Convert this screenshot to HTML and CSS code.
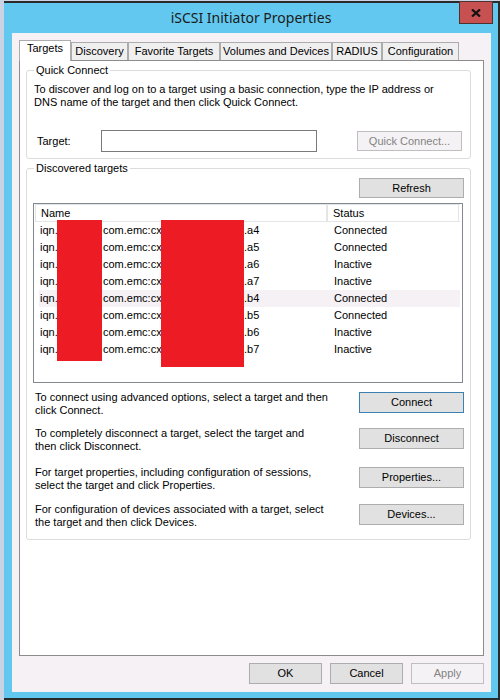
FILE: index.html
```html
<!DOCTYPE html>
<html>
<head>
<meta charset="utf-8">
<link rel="stylesheet" href="styles.css">
</head>
<body>
<div class="window">
  <div class="titlebar">
    <span class="title">iSCSI Initiator Properties</span>
    <div class="close">
      <svg width="10" height="8" viewBox="0 0 10 8"><path d="M1 0.5 L9 7.5 M9 0.5 L1 7.5" stroke="#111" stroke-width="2.2"/></svg>
    </div>
  </div>
  <div class="client">
    <div class="tabs">
      <div class="tab active w-targets">Targets</div>
      <div class="tab w-discovery">Discovery</div>
      <div class="tab w-fav">Favorite Targets</div>
      <div class="tab w-vol">Volumes and Devices</div>
      <div class="tab w-radius">RADIUS</div>
      <div class="tab w-config">Configuration</div>
    </div>
    <div class="panel">
      <fieldset class="group group-qc">
        <legend>Quick Connect</legend>
        <p class="desc-qc">To discover and log on to a target using a basic connection, type the IP address or<br>DNS name of the target and then click Quick Connect.</p>
        <div class="target-row">
          <span class="target-label">Target:</span>
          <div class="input"></div>
          <div class="btn disabled btn-qc">Quick Connect...</div>
        </div>
      </fieldset>
      <fieldset class="group group-dt">
        <legend>Discovered targets</legend>
        <div class="refresh-row">
          <div class="btn">Refresh</div>
        </div>
        <div class="list">
          <div class="list-head">
            <div class="hcell hname">Name</div>
            <div class="hcell hstatus">Status</div>
          </div>
          <div class="rows">
            <div class="row"><div class="ncell"><span class="s1">iqn.</span><span class="s2">com.emc:cx</span><span>.a4</span></div><div class="scell">Connected</div></div>
            <div class="row"><div class="ncell"><span class="s1">iqn.</span><span class="s2">com.emc:cx</span><span>.a5</span></div><div class="scell">Connected</div></div>
            <div class="row"><div class="ncell"><span class="s1">iqn.</span><span class="s2">com.emc:cx</span><span>.a6</span></div><div class="scell">Inactive</div></div>
            <div class="row"><div class="ncell"><span class="s1">iqn.</span><span class="s2">com.emc:cx</span><span>.a7</span></div><div class="scell">Inactive</div></div>
            <div class="row hover"><div class="ncell"><span class="s1">iqn.</span><span class="s2">com.emc:cx</span><span>.b4</span></div><div class="scell">Connected</div></div>
            <div class="row"><div class="ncell"><span class="s1">iqn.</span><span class="s2">com.emc:cx</span><span>.b5</span></div><div class="scell">Connected</div></div>
            <div class="row"><div class="ncell"><span class="s1">iqn.</span><span class="s2">com.emc:cx</span><span>.b6</span></div><div class="scell">Inactive</div></div>
            <div class="row"><div class="ncell"><span class="s1">iqn.</span><span class="s2">com.emc:cx</span><span>.b7</span></div><div class="scell">Inactive</div></div>
          </div>
          <div class="redact r1"></div>
          <div class="redact r2"></div>
        </div>
        <div class="actions">
          <div class="action">
            <p class="adesc">To connect using advanced options, select a target and then<br>click Connect.</p>
            <div class="btn focus">Connect</div>
          </div>
          <div class="action gap10">
            <p class="adesc">To completely disconnect a target, select the target and<br>then click Disconnect.</p>
            <div class="btn">Disconnect</div>
          </div>
          <div class="action gap13">
            <p class="adesc">For target properties, including configuration of sessions,<br>select the target and click Properties.</p>
            <div class="btn">Properties...</div>
          </div>
          <div class="action gap11">
            <p class="adesc">For configuration of devices associated with a target, select<br>the target and then click Devices.</p>
            <div class="btn">Devices...</div>
          </div>
        </div>
      </fieldset>
    </div>
    <div class="footer">
      <div class="btn fbtn">OK</div>
      <div class="btn fbtn">Cancel</div>
      <div class="btn fbtn disabled">Apply</div>
    </div>
  </div>
</div>
</body>
</html>
```
FILE: styles.css
```css
* { box-sizing: border-box; }
html, body {
  margin: 0;
  padding: 0;
  width: 500px;
  height: 700px;
  overflow: hidden;
  background: #c9d3e3;
}
body {
  padding-top: 1px;
  font-family: "Liberation Sans", Arial, sans-serif;
  font-size: 11px;
  line-height: 13px;
  color: #000;
}
.window {
  margin-left: 4px;
  width: 496px;
  height: 699px;
  background: #62c8ef;
  border-top: 2px solid #2b2b2b;
  border-right: 2px solid #2b2b2b;
  border-bottom: 2px solid #2b2b2b;
  padding-left: 8px;
}
.titlebar {
  position: relative;
  height: 30px;
  display: flex;
  align-items: center;
  justify-content: center;
  margin-left: -8px;
}
.title {
  font-family: "Noto Sans", "Open Sans", sans-serif;
  font-size: 14px;
  color: #1b1b1b;
  line-height: 30px;
  margin-top: -1px;
}
.close {
  position: absolute;
  top: -2px;
  right: 5px;
  width: 34px;
  height: 23px;
  background: #c75050;
  border: 1px solid #4d3030;
  display: flex;
  align-items: center;
  justify-content: center;
}
.client {
  width: 479px;
  height: 659px;
  background: #f5f1f5;
  padding: 7px 7px 0 7px;
}
.tabs {
  display: flex;
  align-items: flex-end;
  height: 20px;
}
.tab {
  height: 18px;
  border: 1px solid #acacac;
  border-bottom: none;
  background: #f0eff0;
  text-align: center;
  padding-top: 2px;
  white-space: nowrap;
}
.tab.active {
  height: 21px;
  background: #fff;
  margin-bottom: -1px;
  position: relative;
  z-index: 1;
  padding-top: 1px;
}
.w-targets { width: 52px; }
.w-discovery { width: 57px; }
.w-fav { width: 92px; }
.w-vol { width: 112px; }
.w-radius { width: 50px; }
.w-config { width: 77px; }
.panel {
  width: 465px;
  height: 596px;
  background: #fff;
  border: 1px solid #8c8c8c;
  padding: 3px 0 0 6px;
}
.group {
  margin: 0;
  width: 445px;
  border: 1px solid #dcdcdc;
  border-radius: 3px;
  padding: 6px 6px 6px 6px;
  min-width: 0;
}
.group legend {
  padding: 0 2px;
  margin-left: 1px;
  line-height: 13px;
}
.desc-qc {
  margin: 0 0 0 1px;
  white-space: nowrap;
}
.target-row {
  display: flex;
  align-items: center;
  margin-top: 21px;
  height: 22px;
}
.target-label {
  width: 68px;
  padding-left: 4px;
}
.input {
  width: 216px;
  height: 22px;
  border: 1px solid #7a7a7a;
  background: #fff;
}
.btn {
  width: 105px;
  height: 21px;
  border: 1px solid #adadad;
  background: #e1e1e1;
  display: flex;
  align-items: center;
  justify-content: center;
  white-space: nowrap;
  flex: none;
}
.btn.disabled {
  background: #f4f2f4;
  border-color: #bfbfbf;
  color: #838383;
}
.btn.focus {
  border-color: #3c7fb1;
}
.btn-qc {
  margin-left: 40px;
  height: 20px;
}
.group-dt {
  margin-top: 3px;
  padding-top: 3px;
  padding-bottom: 10px;
}
.refresh-row {
  display: flex;
  justify-content: flex-end;
}
.refresh-row .btn { height: 20px; }
.list {
  position: relative;
  margin-top: 5px;
  width: 430px;
  height: 180px;
  border: 1px solid #828790;
  background: #fff;
  padding: 0 2px 0 1px;
}
.list-head {
  display: grid;
  grid-template-columns: 293px 131px;
  height: 18px;
  border-top: 1px solid #e5e5e5;
  border-bottom: 1px solid #e5e5e5;
}
.hcell {
  line-height: 16px;
  padding-left: 5px;
}
.hname {
  border-left: 1px solid #e5e5e5;
  border-right: 2px solid #e5e5e5;
}
.hstatus {
  border-right: 1px solid #e5e5e5;
}
.rows {
  margin-left: 4px;
  width: 421px;
}
.row {
  display: grid;
  grid-template-columns: 289px 1fr;
  height: 17px;
  line-height: 17px;
}
.row.hover { background: #f5f1f5; }
.ncell {
  display: flex;
  padding-left: 1px;
  white-space: nowrap;
}
.s1 { width: 63px; }
.s2 { width: 141px; }
.scell { padding-left: 6px; }
.redact {
  position: absolute;
  background: #ed1c24;
}
.r1 { left: 23px; top: 16px; width: 45px; height: 141px; }
.r2 { left: 127px; top: 16px; width: 83px; height: 147px; }
.actions {
  display: flex;
  flex-direction: column;
  margin-top: 8px;
}
.action {
  display: flex;
  justify-content: space-between;
  align-items: flex-start;
}
.gap10 { margin-top: 10px; }
.gap13 { margin-top: 13px; }
.gap11 { margin-top: 11px; }
.adesc {
  margin: 0 0 0 2px;
  white-space: nowrap;
}
.action .btn { margin-top: 1px; height: 21px; }
.footer {
  display: flex;
  justify-content: flex-end;
  gap: 8px;
  margin-top: 7px;
}
.fbtn { width: 73px; height: 21px; }
```
